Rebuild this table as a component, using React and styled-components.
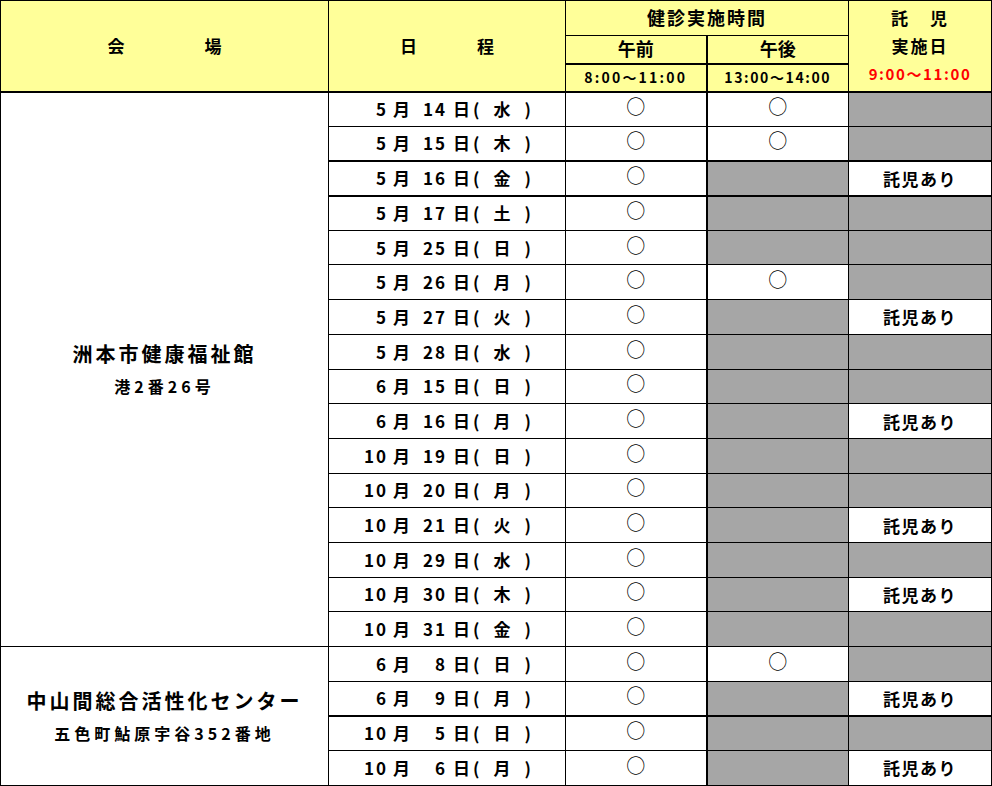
import styled, { createGlobalStyle } from "styled-components";

const GlobalStyle = createGlobalStyle`
  html, body {
    margin: 0;
    padding: 0;
    background: #ffffff;
  }
  body {
    font-family: "Noto Sans CJK JP", "Noto Sans", sans-serif;
    color: #000;
  }
`;

const Table = styled.table`
  width: 991px;
  border-collapse: collapse;
  border: 1px solid #000;
  table-layout: fixed;
  font-weight: 700;
`;

const HeadCell = styled.th`
  background: #ffff99;
  border: 1px solid #000;
  border-left-width: ${(p) => (p.$thickLeft ? "2px" : "1px")};
  border-bottom-width: ${(p) => (p.$thickBottom ? "2px" : "1px")};
  padding: 0;
  font-size: ${(p) => p.$size || 17}px;
  font-weight: 700;
  letter-spacing: ${(p) => p.$spacing || 0}px;
  color: ${(p) => (p.$red ? "#ff0000" : "#000")};
  text-align: center;
  vertical-align: middle;
  line-height: 1.2;
`;

const Spread = styled.span`
  display: inline-flex;
  gap: ${(p) => p.$gap}px;
`;

const StackLine = styled.div`
  font-size: ${(p) => p.$size || 17}px;
  color: ${(p) => (p.$red ? "#ff0000" : "#000")};
  letter-spacing: ${(p) => p.$spacing || 0}px;
  line-height: 28px;
`;

const Row = styled.tr`
  height: 34.7px;
`;

const Cell = styled.td`
  border: 1px solid #000;
  border-left-width: ${(p) => (p.$thickLeft ? "2px" : "1px")};
  border-bottom-width: ${(p) => (p.$thickBottom ? "2px" : "1px")};
  background: ${(p) => (p.$gray ? "#a6a6a6" : "#fff")};
  padding: 0;
  text-align: center;
  vertical-align: middle;
`;

const VenueName = styled.div`
  font-size: 20px;
  letter-spacing: 3px;
  line-height: 26px;
`;

const VenueAddress = styled.div`
  font-size: 16px;
  letter-spacing: 4px;
  line-height: 22px;
  margin-top: 8px;
`;

const DateText = styled.span`
  display: inline-flex;
  align-items: center;
  width: 172px;
  font-size: 17px;
  line-height: 20px;
`;

const Num = styled.span`
  display: inline-block;
  width: ${(p) => p.$w}px;
  text-align: right;
  letter-spacing: 2px;
`;

const Unit = styled.span`
  display: inline-block;
  margin: 0 ${(p) => p.$right}px 0 ${(p) => p.$left}px;
`;

const Week = styled.span`
  display: inline-flex;
  justify-content: space-between;
  width: 58px;
  margin-left: 3px;
`;

const Mark = styled.span`
  display: inline-block;
  font-size: 19px;
  font-weight: 400;
  line-height: 20px;
  transform: translateY(-2px);
`;

const ChildCare = styled.span`
  font-size: 17px;
  letter-spacing: 1.5px;
`;

const venues = [
  {
    name: "洲本市健康福祉館",
    address: "港2番26号",
    days: [
      [5, 14, "水", true, false],
      [5, 15, "木", true, false],
      [5, 16, "金", false, true],
      [5, 17, "土", false, false],
      [5, 25, "日", false, false],
      [5, 26, "月", true, false],
      [5, 27, "火", false, true],
      [5, 28, "水", false, false],
      [6, 15, "日", false, false],
      [6, 16, "月", false, true],
      [10, 19, "日", false, false],
      [10, 20, "月", false, false],
      [10, 21, "火", false, true],
      [10, 29, "水", false, false],
      [10, 30, "木", false, true],
      [10, 31, "金", false, false],
    ],
  },
  {
    name: "中山間総合活性化センター",
    address: "五色町鮎原宇谷352番地",
    days: [
      [6, 8, "日", true, false],
      [6, 9, "月", false, true],
      [10, 5, "日", false, false],
      [10, 6, "月", false, true],
    ],
  },
];

const thickAfter = ["5-15", "5-16", "6-9"];

function DateLabel({ month, day, week }) {
  return (
    <DateText>
      <Num $w={27}>{month}</Num>
      <Unit $left={5} $right={7}>月</Unit>
      <Num $w={30}>{day}</Num>
      <Unit $left={6} $right={0}>日</Unit>
      <Week>
        <span>(</span>
        <span>{week}</span>
        <span>)</span>
      </Week>
    </DateText>
  );
}

export default function App() {
  return (
    <>
      <GlobalStyle />
      <Table>
        <colgroup>
          <col style={{ width: 328 }} />
          <col style={{ width: 237 }} />
          <col style={{ width: 141 }} />
          <col style={{ width: 142 }} />
          <col style={{ width: 143 }} />
        </colgroup>
        <thead>
          <tr style={{ height: 35 }}>
            <HeadCell rowSpan={3} $thickBottom>
              <Spread $gap={80}>
                <span>会</span>
                <span>場</span>
              </Spread>
            </HeadCell>
            <HeadCell rowSpan={3} $thickBottom>
              <Spread $gap={60}>
                <span>日</span>
                <span>程</span>
              </Spread>
            </HeadCell>
            <HeadCell colSpan={2} $size={18} $spacing={2}>
              健診実施時間
            </HeadCell>
            <HeadCell rowSpan={3} $thickBottom>
              <StackLine $spacing={2}>
                <Spread $gap={20}>
                  <span>託</span>
                  <span>児</span>
                </Spread>
              </StackLine>
              <StackLine $spacing={2}>実施日</StackLine>
              <StackLine $red $size={15} $spacing={1.6}>
                9:00～11:00
              </StackLine>
            </HeadCell>
          </tr>
          <tr style={{ height: 28 }}>
            <HeadCell $size={18} $thickBottom>午前</HeadCell>
            <HeadCell $size={18} $thickBottom $thickLeft>
              午後
            </HeadCell>
          </tr>
          <tr style={{ height: 28 }}>
            <HeadCell $size={14} $spacing={2.2} $thickBottom>
              8:00～11:00
            </HeadCell>
            <HeadCell $size={14} $spacing={1.6} $thickBottom $thickLeft>
              13:00～14:00
            </HeadCell>
          </tr>
        </thead>
        <tbody>
          {venues.map((venue) =>
            venue.days.map(([m, d, w, pm, care], i) => {
              const thick = thickAfter.includes(`${m}-${d}`);
              return (
                <Row key={`${m}-${d}`}>
                  {i === 0 && (
                    <Cell rowSpan={venue.days.length}>
                      <VenueName>{venue.name}</VenueName>
                      <VenueAddress>{venue.address}</VenueAddress>
                    </Cell>
                  )}
                  <Cell $thickBottom={thick}>
                    <DateLabel month={m} day={d} week={w} />
                  </Cell>
                  <Cell $thickBottom={thick}>
                    <Mark>○</Mark>
                  </Cell>
                  <Cell $thickBottom={thick} $thickLeft $gray={!pm}>
                    {pm && <Mark>○</Mark>}
                  </Cell>
                  <Cell $thickBottom={thick} $gray={!care}>
                    {care && <ChildCare>託児あり</ChildCare>}
                  </Cell>
                </Row>
              );
            })
          )}
        </tbody>
      </Table>
    </>
  );
}
